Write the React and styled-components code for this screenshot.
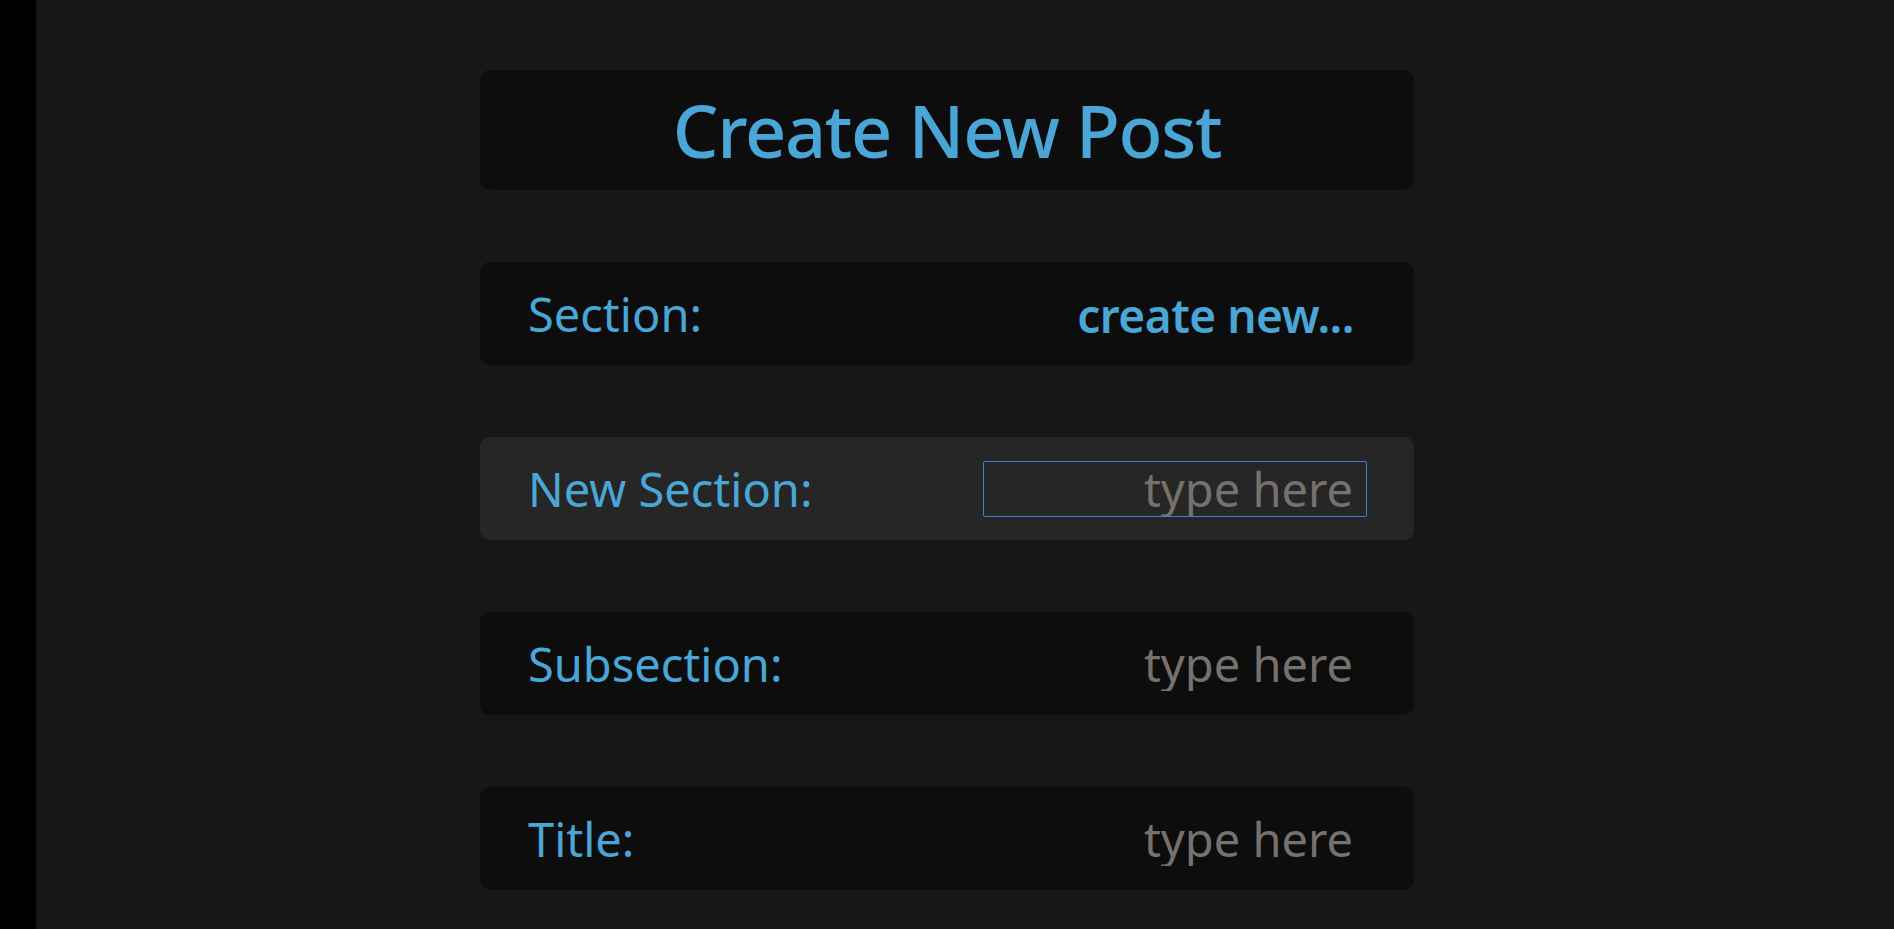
import React from "react";
import styled, { createGlobalStyle } from "styled-components";

const Global = createGlobalStyle`
  html, body { margin: 0; padding: 0; background: #171717; }
  body { font-family: "Noto Sans", "Open Sans", sans-serif; }
  * { box-sizing: border-box; }
`;

const Page = styled.div`
  display: grid;
  grid-template-columns: 36px 1fr;
  min-height: 100vh;
  background: #171717;
`;

const SideBar = styled.aside`
  background: #000;
`;

const Main = styled.main`
  display: flex;
  flex-direction: column;
  align-items: center;
  padding: 70px 36px 40px 0;
`;

const Form = styled.form`
  width: 934px;
  display: flex;
  flex-direction: column;
  gap: 72px;
`;

const Header = styled.div`
  height: 120px;
  border-radius: 10px;
  background: #0d0d0d;
  display: flex;
  align-items: center;
  justify-content: center;
`;

const Title = styled.h1`
  margin: 0;
  font-size: 72px;
  font-weight: 500;
  color: #49a6d6;
  letter-spacing: -1.3px;
  line-height: 1;
`;

const Row = styled.div`
  height: 103px;
  border-radius: 10px;
  background: ${(p) => (p.$active ? "#262626" : "#0d0d0d")};
  display: flex;
  align-items: center;
  justify-content: space-between;
  padding: 0 47px 0 48px;
`;

const Label = styled.label`
  font-size: 47px;
  color: #49a6d6;
  line-height: 1;
  padding-top: 2px;
`;

const Choice = styled.div`
  font-size: 46px;
  font-weight: 600;
  color: #49a6d6;
  padding: 2px 13px 0 0;
  line-height: 1;
  letter-spacing: -0.5px;
`;

const Input = styled.input`
  width: 384px;
  height: 56px;
  background: transparent;
  border: 1px solid ${(p) => (p.$active ? "#3f7ed8" : "transparent")};
  border-radius: 2px;
  outline: none;
  padding: 0 13px 0 0;
  text-align: right;
  font-family: inherit;
  font-size: 47px;
  color: #ddd;
  caret-color: #ddd;
  &::placeholder { color: #77716d; opacity: 1; }
`;

const fields = [
  { label: "New Section:", active: true },
  { label: "Subsection:" },
  { label: "Title:" },
];

export default function App() {
  return (
    <>
      <Global />
      <Page>
        <SideBar />
        <Main>
          <Form onSubmit={(e) => e.preventDefault()}>
            <Header>
              <Title>Create New Post</Title>
            </Header>
            <Row>
              <Label>Section:</Label>
              <Choice>create new...</Choice>
            </Row>
            {fields.map((f) => (
              <Row key={f.label} $active={f.active}>
                <Label>{f.label}</Label>
                <Input placeholder="type here" $active={f.active} autoFocus={f.active} />
              </Row>
            ))}
          </Form>
        </Main>
      </Page>
    </>
  );
}
